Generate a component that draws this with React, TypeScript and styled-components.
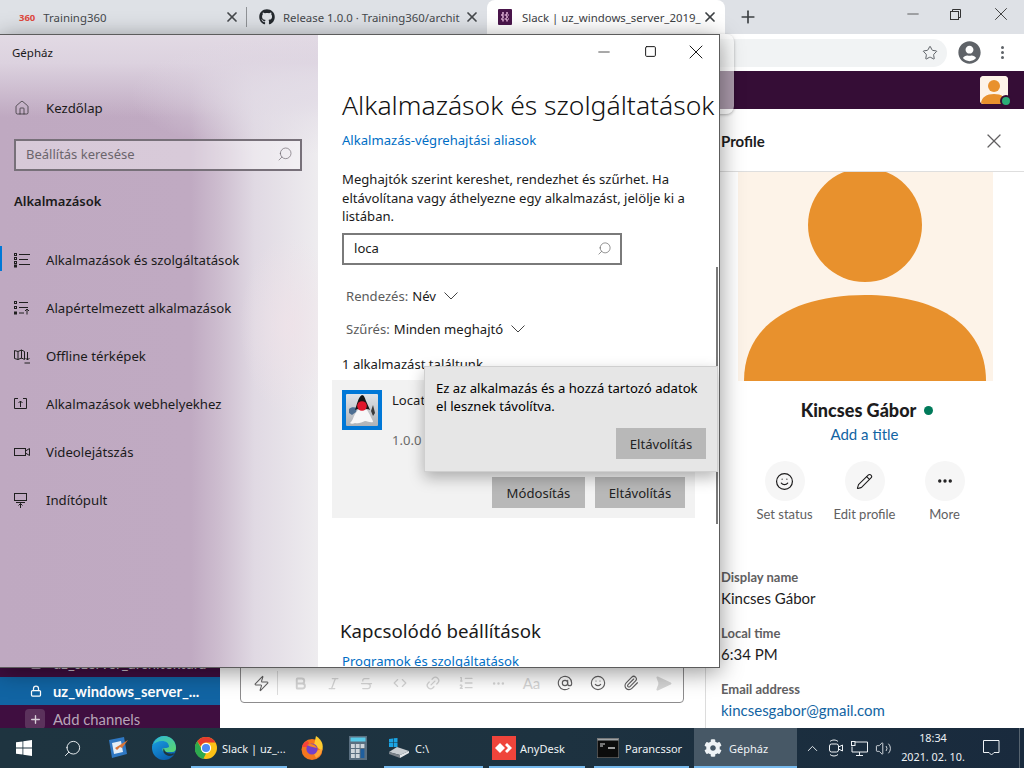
import React from "react";
import styled, { createGlobalStyle } from "styled-components";
import {
  AtSign,
  Bold,
  ChevronUp,
  Code,
  Ellipsis,
  House,
  Italic,
  Link2,
  ListOrdered,
  Lock,
  Minus,
  Paperclip,
  Pencil,
  Plus,
  Search,
  SendHorizontal,
  Smile,
  Square,
  Star,
  Strikethrough,
  Volume2,
  X,
  Zap,
} from "lucide-react";
import { FaGithub, FaUserCircle, FaCog } from "react-icons/fa";

const SEGOE = `"Noto Sans", "Open Sans", sans-serif`;
const LATO = `Lato, "Noto Sans", sans-serif`;

const GlobalStyle = createGlobalStyle`
  html, body {
    margin: 0;
    padding: 0;
    width: 1024px;
    height: 768px;
    overflow: hidden;
    font-family: ${SEGOE};
  }
`;

const Desktop = styled.div`
  position: relative;
  width: 1024px;
  height: 768px;
  overflow: hidden;
  display: grid;
  grid-template-columns: 1024px;
  grid-template-rows: 728px 40px;
`;

/* Chrome window */

const Browser = styled.div`
  display: flex;
  flex-direction: column;
  min-height: 0;
  background: #fff;
`;

const TabStrip = styled.div`
  height: 34px;
  flex: none;
  display: flex;
  align-items: stretch;
  background: #dee1e6;
`;

const Tab = styled.div<{ $width: number; $pad: number; $gap: number; $active?: boolean; $divider?: boolean }>`
  width: ${(p) => p.$width}px;
  flex: none;
  box-sizing: border-box;
  display: flex;
  align-items: center;
  gap: ${(p) => p.$gap}px;
  padding: 0 7px 0 ${(p) => p.$pad}px;
  font-size: 11.4px;
  color: ${(p) => (p.$active ? "#3c4043" : "#45484c")};
  background: ${(p) => (p.$active ? "#fff" : "transparent")};
  border-radius: ${(p) => (p.$active ? "8px 8px 0 0" : "0")};
  position: relative;
  & > svg {
    flex: none;
  }
  &::after {
    content: "";
    display: ${(p) => (p.$divider ? "block" : "none")};
    position: absolute;
    right: 0;
    top: 7px;
    bottom: 7px;
    width: 1px;
    background: #8f9296;
  }
`;

const TabTitle = styled.span`
  flex: 1;
  min-width: 0;
  white-space: nowrap;
`;

const Logo360 = styled.span`
  font: bold 9.5px ${SEGOE};
  color: #e0483e;
`;

const NewTab = styled.div`
  width: 46px;
  display: flex;
  align-items: center;
  justify-content: center;
  color: #3c4043;
`;

const WindowControls = styled.div`
  margin-left: auto;
  display: flex;
  align-items: flex-start;
`;

const ChromeControl = styled.div<{ $width?: number }>`
  width: ${(p) => p.$width ?? 46}px;
  height: 28px;
  display: flex;
  align-items: center;
  justify-content: center;
  color: #333;
`;

const Toolbar = styled.div`
  height: 37px;
  flex: none;
  display: flex;
  align-items: center;
  padding-left: 600px;
  background: #fff;
`;

const Omnibox = styled.div`
  flex: 1;
  height: 28px;
  border-radius: 14px;
  background: #f1f3f4;
  display: flex;
  align-items: center;
  justify-content: flex-end;
  padding-right: 9px;
  color: #5f6368;
`;

const ToolbarEnd = styled.div`
  width: 77px;
  flex: none;
  display: flex;
  align-items: center;
  color: #5f6368;
  padding-left: 11px;
  box-sizing: border-box;
  gap: 20px;
`;

const KebabDots = styled.div`
  display: flex;
  flex-direction: column;
  gap: 2px;
  & > i {
    display: block;
    width: 3px;
    height: 3px;
    border-radius: 50%;
    background: #5f6368;
  }
`;

const SlackHeader = styled.div`
  height: 38px;
  flex: none;
  display: flex;
  align-items: center;
  justify-content: flex-end;
  padding-right: 16px;
  background: #350d36;
`;

const HeaderAvatar = styled.div`
  position: relative;
  width: 28px;
  height: 28px;
  border-radius: 4px;
  background: #fdf3e8;
  & > svg {
    display: block;
    border-radius: 4px;
  }
`;

const PresenceBadge = styled.span`
  position: absolute;
  right: -4px;
  bottom: -3px;
  width: 8px;
  height: 8px;
  border-radius: 50%;
  background: #2bac76;
  border: 2px solid #350d36;
`;

const SlackBody = styled.div`
  flex: 1;
  min-height: 0;
  display: grid;
  grid-template-columns: 220px 485px 319px;
`;

const ChannelSidebar = styled.div`
  background: #3f0e40;
  display: flex;
  flex-direction: column;
  justify-content: flex-end;
  overflow: hidden;
  font-family: ${LATO};
  font-size: 14.8px;
  color: #cfc3cf;
`;

const ChannelRow = styled.div<{ $active?: boolean }>`
  height: 28px;
  flex: none;
  display: flex;
  align-items: center;
  gap: 11px;
  padding-left: 30px;
  white-space: nowrap;
  color: ${(p) => (p.$active ? "#fff" : "#cfc3cf")};
  background: ${(p) => (p.$active ? "#1164a3" : "transparent")};
  font-weight: ${(p) => (p.$active ? 700 : 400)};
`;

const AddRow = styled.div`
  height: 28px;
  flex: none;
  display: flex;
  align-items: center;
  gap: 8px;
  padding-left: 25px;
  margin-bottom: -5px;
  color: #b7a5b8;
`;

const AddBox = styled.span`
  width: 20px;
  height: 20px;
  border-radius: 4px;
  background: #5b325c;
  color: #d9cfd9;
  display: flex;
  align-items: center;
  justify-content: center;
`;

const MessagePane = styled.div`
  display: flex;
  flex-direction: column;
  justify-content: flex-end;
  padding: 0 21px 25px 20px;
  background: #fff;
`;

const Composer = styled.div`
  height: 90px;
  box-sizing: border-box;
  border: 1px solid #8d8c8d;
  border-radius: 4px;
  display: flex;
  align-items: flex-end;
  padding-bottom: 3px;
`;

const ComposerTool = styled.span<{ $width?: number; $inset?: number; $dark?: boolean }>`
  width: ${(p) => p.$width ?? 33}px;
  height: 32px;
  flex: none;
  box-sizing: border-box;
  padding-left: ${(p) => p.$inset ?? 0}px;
  display: flex;
  align-items: center;
  justify-content: center;
  font: 15px ${LATO};
  color: ${(p) => (p.$dark ? "#616061" : "#d6d6d6")};
`;

const ComposerDivider = styled.span`
  width: 1px;
  height: 24px;
  margin: 0 6px 4px 0;
  background: #ddd;
  flex: none;
`;

const ProfilePanel = styled.div`
  box-sizing: border-box;
  border-left: 1px solid #dcdcdc;
  background: #fff;
  font-family: ${LATO};
  color: #1d1c1d;
  display: flex;
  flex-direction: column;
  overflow: hidden;
`;

const ProfileHeader = styled.div`
  height: 63px;
  flex: none;
  box-sizing: border-box;
  display: flex;
  align-items: center;
  justify-content: space-between;
  padding: 1px 18px 0 15px;
  border-bottom: 1px solid #dedede;
  font-size: 15px;
  font-weight: 700;
  & > svg {
    color: #616061;
  }
`;

const ProfileCard = styled.div`
  width: 255px;
  margin-left: 32px;
  display: flex;
  flex-direction: column;
  align-items: center;
`;

const ProfilePhoto = styled.svg`
  display: block;
  flex: none;
`;

const NameRow = styled.div`
  margin-top: 17px;
  height: 24px;
  display: flex;
  align-items: center;
  gap: 8px;
  font-size: 18px;
  font-weight: 900;
  padding-left: 3px;
`;

const OnlineDot = styled.span`
  width: 9px;
  height: 9px;
  border-radius: 50%;
  background: #007a5a;
`;

const AddTitle = styled.div`
  margin: 2px 2px 0 0;
  height: 20px;
  line-height: 20px;
  font-size: 15px;
  color: #1264a3;
`;

const ProfileActions = styled.div`
  margin: 17px 2px 0 0;
  display: grid;
  grid-template-columns: repeat(3, 80px);
`;

const ProfileAction = styled.div`
  display: flex;
  flex-direction: column;
  align-items: center;
  font-size: 13px;
  color: #616061;
`;

const ActionCircle = styled.span`
  width: 40px;
  height: 40px;
  border-radius: 50%;
  background: #f6f6f6;
  color: #1d1c1d;
  display: flex;
  align-items: center;
  justify-content: center;
  margin-bottom: 4px;
`;

const ActionLabel = styled.span`
  height: 18px;
  line-height: 18px;
  white-space: nowrap;
`;

const ProfileFields = styled.div`
  margin-top: 45px;
  padding-left: 15px;
  display: flex;
  flex-direction: column;
  gap: 15px;
`;

const Field = styled.div`
  display: flex;
  flex-direction: column;
  gap: 1px;
`;

const FieldLabel = styled.div`
  height: 18px;
  line-height: 18px;
  font-size: 13px;
  font-weight: 700;
  color: #616061;
`;

const FieldValue = styled.div<{ $link?: boolean }>`
  height: 22px;
  line-height: 22px;
  font-size: 15px;
  color: ${(p) => (p.$link ? "#1264a3" : "#1d1c1d")};
`;

/* omnibox dropdown peeking out from behind the settings window */
const OmniboxPopup = styled.div`
  position: absolute;
  left: 640px;
  top: 34px;
  width: 94px;
  height: 80px;
  border-radius: 0 8px 8px 0;
  background: rgba(255, 255, 255, 0.58);
  box-shadow: 0 1px 3px rgba(0, 0, 0, 0.3);
`;

/* Settings window */

const SettingsWindow = styled.div`
  position: absolute;
  left: 0;
  top: 34px;
  width: 720px;
  height: 634px;
  box-sizing: border-box;
  border: 1px solid #5c5c5c;
  border-left: none;
  display: grid;
  grid-template-columns: 318px 1fr;
  overflow: hidden;
  z-index: 2;
`;

const WindowShadow = styled.div`
  position: absolute;
  left: 0;
  top: 34px;
  width: 720px;
  height: 634px;
  box-shadow: 0 4px 22px rgba(0, 0, 0, 0.42);
  z-index: 1;
`;

const SettingsNav = styled.div`
  display: flex;
  flex-direction: column;
  font-size: 13.2px;
  color: #1a1a1a;
  background:
    radial-gradient(ellipse 170px 60px at 300px 60px, rgba(226, 220, 230, 0.9), transparent),
    linear-gradient(180deg, #e2dae4 0, #dcd2df 28px, rgba(200, 182, 202, 0) 82px),
    radial-gradient(ellipse 50px 90px at 290px 290px, rgba(240, 226, 232, 0.7), transparent),
    linear-gradient(90deg, #bfa9c1 0%, #c0aac2 60%, #cdbdcf 69%, #e0d9e3 80%, #eeecef 100%);
`;

const NavTitle = styled.div`
  height: 35px;
  line-height: 35px;
  padding-left: 12px;
  font-size: 11.5px;
`;

const NavRow = styled.div<{ $active?: boolean }>`
  position: relative;
  height: 48px;
  flex: none;
  display: flex;
  align-items: center;
  padding-left: 14px;
  white-space: nowrap;
  &::before {
    content: "";
    display: ${(p) => (p.$active ? "block" : "none")};
    position: absolute;
    left: 0;
    top: 10px;
    width: 2px;
    height: 25px;
    background: #0078d7;
  }
`;

const NavIcon = styled.span`
  width: 32px;
  flex: none;
  display: flex;
  align-items: center;
  color: #1f1f1f;
`;

const HomeRow = styled(NavRow)`
  margin-top: 14px;
`;

const NavSearch = styled.div`
  margin: 7px 0 0 14px;
  width: 288px;
  height: 32px;
  flex: none;
  box-sizing: border-box;
  border: 2px solid #777079;
  display: flex;
  align-items: center;
  justify-content: space-between;
  padding: 0 7px 2px 10px;
  color: #6b656c;
  font-size: 13px;
  background: rgba(255, 255, 255, 0.38);
`;

const NavHeading = styled.div`
  margin: 20px 0 25px 14px;
  height: 20px;
  line-height: 20px;
  font-size: 13px;
  font-weight: 600;
`;

const SettingsContent = styled.div`
  position: relative;
  background: #fff;
  padding-left: 24px;
  display: flex;
  flex-direction: column;
  font-size: 13.1px;
  color: #1a1a1a;
  overflow: hidden;
`;

const CaptionButtons = styled.div`
  height: 33px;
  flex: none;
  display: flex;
  justify-content: flex-end;
`;

const CaptionButton = styled.span`
  width: 46px;
  display: flex;
  align-items: center;
  justify-content: center;
`;

const PageTitle = styled.h1`
  margin: 17px 0 0;
  height: 40px;
  flex: none;
  line-height: 40px;
  font-size: 26.5px;
  font-weight: 300;
  white-space: nowrap;
  color: #111;
`;

const ContentLink = styled.div`
  height: 20px;
  flex: none;
  line-height: 20px;
  color: #006ec5;
  white-space: nowrap;
`;

const AliasLink = styled(ContentLink)`
  margin-top: 5px;
`;

const Intro = styled.p`
  margin: 20px 0 0;
  width: 352px;
  line-height: 18.7px;
`;

const SearchBox = styled.div`
  margin-top: 7px;
  width: 280px;
  height: 32px;
  flex: none;
  box-sizing: border-box;
  border: 2px solid #7a7a7a;
  display: flex;
  align-items: center;
  justify-content: space-between;
  padding: 0 8px 2px 10px;
`;

const Dropdown = styled.div<{ $gap: number }>`
  margin-top: ${(p) => p.$gap}px;
  height: 20px;
  flex: none;
  padding-left: 4px;
  display: flex;
  align-items: center;
  gap: 4px;
  white-space: nowrap;
  & > b {
    font-weight: 400;
  }
  & > span {
    color: #5c5c5c;
  }
  & > svg {
    margin-left: 4px;
    color: #444;
  }
`;

const FoundText = styled.div`
  margin-top: 15px;
  height: 20px;
  flex: none;
  line-height: 20px;
`;

const AppItem = styled.div`
  margin: 6px 0 0 -10px;
  width: 363px;
  height: 138px;
  flex: none;
  box-sizing: border-box;
  padding: 10px;
  background: #f2f2f2;
  display: flex;
  flex-direction: column;
`;

const AppHead = styled.div`
  display: flex;
  gap: 10px;
  height: 40px;
`;

const AppName = styled.div`
  height: 20px;
  line-height: 20px;
`;

const AppVersion = styled.div`
  margin-left: 50px;
  height: 20px;
  line-height: 20px;
  color: #6b6b6b;
`;

const AppActions = styled.div`
  margin-top: 27px;
  display: flex;
  justify-content: flex-end;
  gap: 10px;
`;

const GreyButton = styled.button<{ $width: number }>`
  width: ${(p) => p.$width}px;
  height: 31px;
  border: none;
  padding: 0;
  background: #b8b8b8;
  color: #222;
  font: 13.1px ${SEGOE};
`;

const RelatedTitle = styled.h2`
  margin: 99px 0 0 -2px;
  height: 28px;
  flex: none;
  line-height: 28px;
  font-size: 18.7px;
  font-weight: 400;
  white-space: nowrap;
`;

const RelatedLink = styled(ContentLink)`
  margin-top: 6px;
`;

const ScrollThumb = styled.div`
  position: absolute;
  right: 1px;
  top: 232px;
  width: 2px;
  height: 257px;
  background: #7a7a7a;
`;

const Flyout = styled.div`
  position: absolute;
  left: 424px;
  top: 331px;
  width: 294px;
  height: 106px;
  box-sizing: border-box;
  padding: 12px 11px 12px;
  background: #e6e6e6;
  border: 1px solid #cfcfcf;
  box-shadow: 0 6px 14px rgba(0, 0, 0, 0.28);
  font-size: 13.1px;
  line-height: 18.2px;
  display: flex;
  flex-direction: column;
  align-items: flex-end;
  justify-content: space-between;
  & > p {
    margin: 0;
    align-self: stretch;
  }
`;

/* Taskbar */

const Taskbar = styled.div`
  display: flex;
  align-items: stretch;
  background: linear-gradient(90deg, #1e3440 0%, #1d3240 55%, #192a3d 100%);
  color: #eef2f5;
  font-size: 11px;
`;

const TaskItem = styled.div<{ $width: number; $pad?: number; $gap?: number; $open?: boolean; $focused?: boolean }>`
  position: relative;
  width: ${(p) => p.$width}px;
  flex: none;
  box-sizing: border-box;
  display: flex;
  align-items: center;
  justify-content: ${(p) => (p.$pad === undefined ? "center" : "flex-start")};
  gap: ${(p) => p.$gap ?? 5}px;
  padding-left: ${(p) => p.$pad ?? 0}px;
  white-space: nowrap;
  background: ${(p) => (p.$focused ? "#475866" : "transparent")};
  & > svg {
    flex: none;
  }
  &::after {
    content: "";
    display: ${(p) => (p.$open ? "block" : "none")};
    position: absolute;
    left: 0;
    right: 0;
    bottom: 0;
    height: 2px;
    background: #76b9ed;
  }
`;

const TaskGap = styled.span<{ $width: number }>`
  width: ${(p) => p.$width}px;
  flex: none;
`;

const Tray = styled.div`
  margin-left: 7px;
  display: flex;
  align-items: center;
  gap: 7px;
  & > svg {
    flex: none;
  }
`;

const Clock = styled.div`
  width: 76px;
  flex: none;
  margin-left: 3px;
  padding-top: 1px;
  text-align: center;
  font-size: 10.8px;
  line-height: 18.5px;
  white-space: nowrap;
`;

const ActionCenter = styled.div`
  margin-left: 12px;
  display: flex;
  align-items: center;
`;

const TaskbarEdge = styled.span`
  width: 1px;
  margin-left: 19px;
  background: #56636f;
`;

/* Drawn icons */

const lineProps = { fill: "none", stroke: "currentColor", strokeWidth: 1 } as const;

function AppsIcon() {
  return (
    <svg width="16" height="16" viewBox="0 0 16 16" {...lineProps}>
      <rect x=".5" y="1.5" width="2" height="2" />
      <rect x=".5" y="5.5" width="2" height="2" />
      <rect x=".5" y="9.5" width="2" height="2" />
      <rect x=".5" y="13" width="2" height="2" />
      <path d="M5 2.5h11M5 7.5h9M5 12.5h11" />
    </svg>
  );
}

function DefaultAppsIcon() {
  return (
    <svg width="16" height="14" viewBox="0 0 16 14" {...lineProps}>
      <rect x=".5" y=".5" width="2" height="2" />
      <rect x=".5" y="5.5" width="2" height="2" />
      <rect x=".5" y="11" width="2" height="2" />
      <path d="M5 1.5h9M5 6.5h9M5 12h5M13 13.5V8M11 10l2-2 2 2" />
    </svg>
  );
}

function MapsIcon() {
  return (
    <svg width="16" height="15" viewBox="0 0 16 15" {...lineProps}>
      <path d="M.5 1.5l3.5 1 3.5-1.5 3 1.5v8l-3-1.5-3.5 1.5-3.5-1zM4 2.5v8M7.5 1v8.5" />
      <path d="M13.5 3v8M11.5 9l2 2 2-2M10.5 14h5.5" />
    </svg>
  );
}

function WebsitesIcon() {
  return (
    <svg width="14" height="12" viewBox="0 0 14 12" {...lineProps}>
      <path d="M4 .5H.5v10h12V.5H9M6.5 9V3M4.5 5l2-2 2 2" />
    </svg>
  );
}

function VideoIcon() {
  return (
    <svg width="16" height="10" viewBox="0 0 16 10" {...lineProps}>
      <rect x=".5" y="1.5" width="11" height="7" />
      <path d="M11.5 4l4-2.5v7l-4-2.5" />
    </svg>
  );
}

function StartupIcon() {
  return (
    <svg width="14" height="15" viewBox="0 0 14 15" {...lineProps}>
      <rect x=".5" y=".5" width="12" height="7" />
      <path d="M2 9.5h9M6.5 15V10.5M4.5 12.5l2-2 2 2" />
    </svg>
  );
}

function SearchGlass({ size, color }: { size: number; color?: string }) {
  return <Search size={size} strokeWidth={1} color={color} style={{ transform: "scaleX(-1)", flex: "none" }} />;
}

function ChevronWide() {
  return (
    <svg width="14" height="8" viewBox="0 0 14 8" {...lineProps}>
      <path d="M.5.5L7 7l6.5-6.5" />
    </svg>
  );
}

function DukeIcon() {
  return (
    <svg width="40" height="40" viewBox="0 0 40 40" style={{ flex: "none" }}>
      <defs>
        <linearGradient id="duke-bg" x1="0" y1="0" x2="0" y2="1">
          <stop offset="0" stopColor="#dfe3e8" />
          <stop offset="1" stopColor="#aeb2b6" />
        </linearGradient>
      </defs>
      <rect width="40" height="40" fill="#0078d7" />
      <rect x="4" y="4" width="32" height="32" rx="1" fill="url(#duke-bg)" />
      <path d="M7 19c2-2 5-2 8-1l-1 4-4 3-3-2z" fill="#4c6f92" />
      <path d="M8 33c3-3 3-5 5-9l3-4h9l3 5c1 3 3 5 3 7-3 1-5-1-8-1-3 1-6 3-10 2-2 1-4 1-5 0z" fill="#f7f7f7" />
      <path d="M20 5c2 0 3 3 4 6l4 9c-4-2-11-2-15 0 2-5 3-13 7-15z" fill="#151515" />
      <circle cx="20" cy="16" r="4.8" fill="#e0162b" />
      <path d="M31 15l2 8-2 3-2-5z" fill="#3a3a3a" />
    </svg>
  );
}

function SlackGlyph() {
  return (
    <svg width="14" height="16" viewBox="0 0 14 16">
      <rect width="14" height="16" rx="1" fill="#4a154b" />
      <path d="M5 3v10M9 3v10M3 6h8M3 10h8" stroke="#d9a9cf" strokeWidth="1.6" strokeDasharray="2.4 1.2" />
    </svg>
  );
}

function AvatarFigure({ size }: { size: number }) {
  return (
    <svg width={size} height={size} viewBox="0 0 28 28">
      <rect width="28" height="28" fill="#fdf3e8" />
      <circle cx="14" cy="10" r="6" fill="#e8912d" />
      <path d="M1 28c0-7 6-10 13-10s13 3 13 10z" fill="#e8912d" />
    </svg>
  );
}

function WindowsLogo() {
  return (
    <svg width="16" height="16" viewBox="0 0 16 16" fill="#fff">
      <path d="M0 2.3l6.5-.9v6.2H0zM7.3 1.3L16 0v7.6H7.3zM0 8.4h6.5v6.2L0 13.7zM7.3 8.4H16V16l-8.7-1.3z" />
    </svg>
  );
}

function NoteIcon() {
  return (
    <svg width="24" height="24" viewBox="0 0 24 24">
      <path d="M3 4l15-3 3 17-15 4z" fill="#2f78c4" />
      <path d="M6 7l9-2 2 11-9 2z" fill="#e4eef7" />
      <path d="M9 12l13-8-6 8-2-1-3 3z" fill="#d9763a" />
    </svg>
  );
}

function EdgeIcon() {
  return (
    <svg width="24" height="24" viewBox="0 0 24 24">
      <defs>
        <linearGradient id="edge-blue" x1="0" y1="0" x2="0.6" y2="1">
          <stop offset="0" stopColor="#1aa6e8" />
          <stop offset="1" stopColor="#0b5fae" />
        </linearGradient>
        <linearGradient id="edge-green" x1="0" y1="0" x2="1" y2="1">
          <stop offset="0" stopColor="#2eb9d8" />
          <stop offset="1" stopColor="#5cd66c" />
        </linearGradient>
      </defs>
      <circle cx="12" cy="12" r="12" fill="url(#edge-blue)" />
      <path d="M1 9C3 3 8 0 12 0c7 0 12 5 12 12 0 2-1 4-4 4h-8c-2-1-2-3-1-4 2 0 5 0 6-1 0-4-3-6-7-6-4 0-7 2-10 4z" fill="url(#edge-green)" />
      <path d="M12 12c-2 3 0 7 5 8 3 0 5-1 6-3-2 1-7 1-9-1-1-1-2-2-2-4z" fill="#1e3440" />
    </svg>
  );
}

function ChromeIcon() {
  return (
    <svg width="22" height="22" viewBox="0 0 24 24">
      <circle cx="12" cy="12" r="12" fill="#fbc116" />
      <path d="M12 0a12 12 0 0 1 10.4 6H12a6 6 0 0 0-5.7 4.1L2.5 4.6A12 12 0 0 1 12 0z" fill="#e33b2e" />
      <path d="M2.5 4.6l4 7a6 6 0 0 0 5.5 6.4L9 24A12 12 0 0 1 2.5 4.6z" fill="#2da94f" />
      <circle cx="12" cy="12" r="5.6" fill="#fff" />
      <circle cx="12" cy="12" r="4.4" fill="#4a8af4" />
    </svg>
  );
}

function FirefoxIcon() {
  return (
    <svg width="24" height="24" viewBox="0 0 24 24">
      <circle cx="12" cy="13.5" r="10.5" fill="#f5761f" />
      <path d="M16 0c6 4 8 9 6 15l-8-6z" fill="#ffcb2f" />
      <path d="M22 13a10 10 0 0 1-6 9l-3-6z" fill="#ffa436" />
      <path d="M2 11c1-4 3-5 6-6l2 6z" fill="#f9423a" />
      <circle cx="12" cy="13" r="5.6" fill="#7541c8" />
      <path d="M7 9c3-2 8-1 10 3-3-1-6-1-10-3z" fill="#f58a1f" />
    </svg>
  );
}

function CalcIcon() {
  return (
    <svg width="18" height="24" viewBox="0 0 18 24">
      <rect width="18" height="24" fill="#5a6f80" />
      <rect x="1.5" y="1.5" width="15" height="4" fill="#57c9e8" />
      {[0, 1, 2].map((r) =>
        [0, 1].map((c) => <rect key={`${r}-${c}`} x={2 + c * 4.8} y={8 + r * 5} width="3.8" height="4" fill="#cfd6db" />),
      )}
      <rect x="11.6" y="8" width="3.8" height="4" fill="#cfd6db" />
      <rect x="11.6" y="13" width="3.8" height="9" fill="#1f5f9e" />
    </svg>
  );
}

function DriveIcon() {
  return (
    <svg width="22" height="20" viewBox="0 0 22 20">
      <path d="M1 1l4-.6v4H1zM5.6.3L9.5 0v4.4H5.6zM1 5h4v4H1zM5.6 5h3.9v4H5.6z" fill="#1ba4e4" />
      <path d="M1 14l8-5 12 4-9 4z" fill="#c7ccd0" />
      <path d="M1 14l11 3v3L1 16z" fill="#7b8289" />
      <path d="M12 17l9-4v2l-9 5z" fill="#e4e6e8" />
    </svg>
  );
}

function AnyDeskIcon() {
  return (
    <svg width="24" height="24" viewBox="0 0 24 24">
      <rect width="24" height="24" fill="#ef443b" />
      <path d="M8 7l5 5-5 5-5-5z" fill="#fff" />
      <path d="M15 7l5 5-5 5-2-2 3-3-3-3z" fill="#fff" />
    </svg>
  );
}

function CmdIcon() {
  return (
    <svg width="22" height="20" viewBox="0 0 22 20">
      <rect width="22" height="20" fill="#0c0c0c" stroke="#8c8c8c" />
      <rect x=".5" y=".5" width="21" height="2" fill="#9fa3a6" />
      <path d="M3 6h5M3 8h3" stroke="#ddd" />
      <path d="M11 10h7" stroke="#ddd" strokeWidth="1.4" />
    </svg>
  );
}

function MeetIcon() {
  return (
    <svg width="16" height="18" viewBox="0 0 16 18" {...lineProps}>
      <rect x="1.5" y="5" width="9" height="8" rx="2" />
      <path d="M10.5 8l4-2v6l-4-2M2 2.5c2-2 6-2 8 0M2 15.5c2 2 6 2 8 0" />
    </svg>
  );
}

function NetworkIcon() {
  return (
    <svg width="17" height="15" viewBox="0 0 17 15" {...lineProps}>
      <path d="M4 1h12.5v10H1V5.5M8.5 11v3M5 14.5h7" />
      <rect x=".5" y=".5" width="3.5" height="4" />
    </svg>
  );
}

function ChatIcon() {
  return (
    <svg width="17" height="16" viewBox="0 0 17 16" {...lineProps}>
      <path d="M.5.5h15.5v12h-5l-2.5 2.5-2.5-2.5H.5z" />
    </svg>
  );
}

export default function App() {
  return (
    <Desktop>
      <GlobalStyle />
      <Browser>
        <TabStrip>
          <Tab $width={247} $pad={19} $gap={8} $divider>
            <Logo360>360</Logo360>
            <TabTitle>Training360</TabTitle>
            <X size={16} strokeWidth={2.6} />
          </Tab>
          <Tab $width={240} $pad={12} $gap={8}>
            <FaGithub size={16} color="#24292e" />
            <TabTitle>Release 1.0.0 · Training360/archit</TabTitle>
            <X size={16} strokeWidth={2.6} />
          </Tab>
          <Tab $width={238} $pad={11} $gap={10} $active>
            <SlackGlyph />
            <TabTitle>Slack | uz_windows_server_2019_</TabTitle>
            <X size={16} strokeWidth={2.6} />
          </Tab>
          <NewTab>
            <Plus size={20} strokeWidth={2} />
          </NewTab>
          <WindowControls>
            <ChromeControl $width={38}>
              <Minus size={18} strokeWidth={1} />
            </ChromeControl>
            <ChromeControl>
              <svg width="11" height="11" viewBox="0 0 11 11" {...lineProps}>
                <rect x=".5" y="2.5" width="8" height="8" />
                <path d="M2.5 2.5v-2h8v8h-2" />
              </svg>
            </ChromeControl>
            <ChromeControl>
              <X size={22} strokeWidth={1} />
            </ChromeControl>
          </WindowControls>
        </TabStrip>
        <Toolbar>
          <Omnibox>
            <Star size={16} strokeWidth={1.5} />
          </Omnibox>
          <ToolbarEnd>
            <FaUserCircle size={23} />
            <KebabDots>
              <i />
              <i />
              <i />
            </KebabDots>
          </ToolbarEnd>
        </Toolbar>
        <SlackHeader>
          <HeaderAvatar>
            <AvatarFigure size={28} />
            <PresenceBadge />
          </HeaderAvatar>
        </SlackHeader>
        <SlackBody>
          <ChannelSidebar>
            <ChannelRow>
              <Lock size={12} strokeWidth={2.5} />
              uz_szerver_architektúra
            </ChannelRow>
            <ChannelRow $active>
              <Lock size={12} strokeWidth={2.5} />
              uz_windows_server_...
            </ChannelRow>
            <AddRow>
              <AddBox>
                <Plus size={13} strokeWidth={2.5} />
              </AddBox>
              Add channels
            </AddRow>
          </ChannelSidebar>
          <MessagePane>
            <Composer>
              <ComposerTool $width={36} $inset={4} $dark>
                <Zap size={17} strokeWidth={1.5} />
              </ComposerTool>
              <ComposerDivider />
              <ComposerTool>
                <Bold size={15} strokeWidth={3} />
              </ComposerTool>
              <ComposerTool>
                <Italic size={15} />
              </ComposerTool>
              <ComposerTool>
                <Strikethrough size={15} />
              </ComposerTool>
              <ComposerTool>
                <Code size={14} />
              </ComposerTool>
              <ComposerTool>
                <Link2 size={16} style={{ transform: "rotate(-45deg)" }} />
              </ComposerTool>
              <ComposerTool>
                <ListOrdered size={16} />
              </ComposerTool>
              <ComposerTool>
                <Ellipsis size={15} />
              </ComposerTool>
              <ComposerTool>Aa</ComposerTool>
              <ComposerTool $dark>
                <AtSign size={16} strokeWidth={1.7} />
              </ComposerTool>
              <ComposerTool $dark>
                <Smile size={16} strokeWidth={1.7} />
              </ComposerTool>
              <ComposerTool $dark>
                <Paperclip size={16} strokeWidth={1.7} />
              </ComposerTool>
              <ComposerTool>
                <SendHorizontal size={17} fill="#d6d6d6" />
              </ComposerTool>
            </Composer>
          </MessagePane>
          <ProfilePanel>
            <ProfileHeader>
              Profile
              <X size={24} strokeWidth={1.2} />
            </ProfileHeader>
            <ProfileCard>
              <ProfilePhoto width="255" height="209" viewBox="0 0 255 209">
                <rect width="255" height="209" fill="#fdf3e8" />
                <circle cx="127" cy="53" r="57" fill="#e8912d" />
                <path d="M6 209C6 150 60 123 127 123C194 123 248 150 248 209Z" fill="#e8912d" />
              </ProfilePhoto>
              <NameRow>
                Kincses Gábor
                <OnlineDot />
              </NameRow>
              <AddTitle>Add a title</AddTitle>
              <ProfileActions>
                <ProfileAction>
                  <ActionCircle>
                    <Smile size={19} strokeWidth={1.5} />
                  </ActionCircle>
                  <ActionLabel>Set status</ActionLabel>
                </ProfileAction>
                <ProfileAction>
                  <ActionCircle>
                    <Pencil size={17} strokeWidth={1.5} />
                  </ActionCircle>
                  <ActionLabel>Edit profile</ActionLabel>
                </ProfileAction>
                <ProfileAction>
                  <ActionCircle>
                    <Ellipsis size={18} strokeWidth={2.5} />
                  </ActionCircle>
                  <ActionLabel>More</ActionLabel>
                </ProfileAction>
              </ProfileActions>
            </ProfileCard>
            <ProfileFields>
              <Field>
                <FieldLabel>Display name</FieldLabel>
                <FieldValue>Kincses Gábor</FieldValue>
              </Field>
              <Field>
                <FieldLabel>Local time</FieldLabel>
                <FieldValue>6:34 PM</FieldValue>
              </Field>
              <Field>
                <FieldLabel>Email address</FieldLabel>
                <FieldValue $link>kincsesgabor@gmail.com</FieldValue>
              </Field>
            </ProfileFields>
          </ProfilePanel>
        </SlackBody>
      </Browser>

      <Taskbar>
        <TaskItem $width={48}>
          <WindowsLogo />
        </TaskItem>
        <TaskItem $width={48}>
          <Search size={19} strokeWidth={1.2} style={{ transform: "scaleX(-1)" }} />
        </TaskItem>
        <TaskItem $width={44}>
          <NoteIcon />
        </TaskItem>
        <TaskItem $width={47}>
          <EdgeIcon />
        </TaskItem>
        <TaskGap $width={4} />
        <TaskItem $width={96} $pad={4} $open>
          <ChromeIcon />
          <span>Slack | uz_...</span>
        </TaskItem>
        <TaskItem $width={50}>
          <FirefoxIcon />
        </TaskItem>
        <TaskItem $width={41}>
          <CalcIcon />
        </TaskItem>
        <TaskGap $width={6} />
        <TaskItem $width={99} $pad={4} $open>
          <DriveIcon />
          <span>C:\</span>
        </TaskItem>
        <TaskGap $width={6} />
        <TaskItem $width={96} $pad={3} $gap={4} $open>
          <AnyDeskIcon />
          <span>AnyDesk</span>
        </TaskItem>
        <TaskGap $width={9} />
        <TaskItem $width={95} $pad={3} $gap={6} $open>
          <CmdIcon />
          <span>Parancssor</span>
        </TaskItem>
        <TaskGap $width={5} />
        <TaskItem $width={103} $pad={10} $gap={7} $open $focused>
          <FaCog size={18} />
          <span>Gépház</span>
        </TaskItem>
        <Tray>
          <ChevronUp size={17} strokeWidth={1.3} />
          <MeetIcon />
          <NetworkIcon />
          <Volume2 size={17} strokeWidth={1.2} />
        </Tray>
        <Clock>
          18:34
          <br />
          2021. 02. 10.
        </Clock>
        <ActionCenter>
          <ChatIcon />
        </ActionCenter>
        <TaskbarEdge />
      </Taskbar>

      <OmniboxPopup />
      <WindowShadow />
      <SettingsWindow>
        <SettingsNav>
          <NavTitle>Gépház</NavTitle>
          <HomeRow>
            <NavIcon>
              <House size={16} strokeWidth={1} />
            </NavIcon>
            Kezdőlap
          </HomeRow>
          <NavSearch>
            Beállítás keresése
            <SearchGlass size={16} />
          </NavSearch>
          <NavHeading>Alkalmazások</NavHeading>
          <NavRow $active>
            <NavIcon>
              <AppsIcon />
            </NavIcon>
            Alkalmazások és szolgáltatások
          </NavRow>
          <NavRow>
            <NavIcon>
              <DefaultAppsIcon />
            </NavIcon>
            Alapértelmezett alkalmazások
          </NavRow>
          <NavRow>
            <NavIcon>
              <MapsIcon />
            </NavIcon>
            Offline térképek
          </NavRow>
          <NavRow>
            <NavIcon>
              <WebsitesIcon />
            </NavIcon>
            Alkalmazások webhelyekhez
          </NavRow>
          <NavRow>
            <NavIcon>
              <VideoIcon />
            </NavIcon>
            Videolejátszás
          </NavRow>
          <NavRow>
            <NavIcon>
              <StartupIcon />
            </NavIcon>
            Indítópult
          </NavRow>
        </SettingsNav>
        <SettingsContent>
          <CaptionButtons>
            <CaptionButton>
              <Minus size={18} strokeWidth={1} />
            </CaptionButton>
            <CaptionButton>
              <Square size={13} strokeWidth={1} absoluteStrokeWidth />
            </CaptionButton>
            <CaptionButton>
              <X size={24} strokeWidth={1} />
            </CaptionButton>
          </CaptionButtons>
          <PageTitle>Alkalmazások és szolgáltatások</PageTitle>
          <AliasLink>Alkalmazás-végrehajtási aliasok</AliasLink>
          <Intro>
            Meghajtók szerint kereshet, rendezhet és szűrhet. Ha eltávolítana vagy áthelyezne egy alkalmazást, jelölje ki a
            listában.
          </Intro>
          <SearchBox>
            loca
            <SearchGlass size={15} color="#555" />
          </SearchBox>
          <Dropdown $gap={21}>
            <span>Rendezés:</span>
            <b>Név</b>
            <ChevronWide />
          </Dropdown>
          <Dropdown $gap={13}>
            <span>Szűrés:</span>
            <b>Minden meghajtó</b>
            <ChevronWide />
          </Dropdown>
          <FoundText>1 alkalmazást találtunk</FoundText>
          <AppItem>
            <AppHead>
              <DukeIcon />
              <AppName>Locator</AppName>
            </AppHead>
            <AppVersion>1.0.0</AppVersion>
            <AppActions>
              <GreyButton $width={93}>Módosítás</GreyButton>
              <GreyButton $width={90}>Eltávolítás</GreyButton>
            </AppActions>
          </AppItem>
          <RelatedTitle>Kapcsolódó beállítások</RelatedTitle>
          <RelatedLink>Programok és szolgáltatások</RelatedLink>
          <ScrollThumb />
        </SettingsContent>
        <Flyout>
          <p>Ez az alkalmazás és a hozzá tartozó adatok el lesznek távolítva.</p>
          <GreyButton $width={90}>Eltávolítás</GreyButton>
        </Flyout>
      </SettingsWindow>
    </Desktop>
  );
}
